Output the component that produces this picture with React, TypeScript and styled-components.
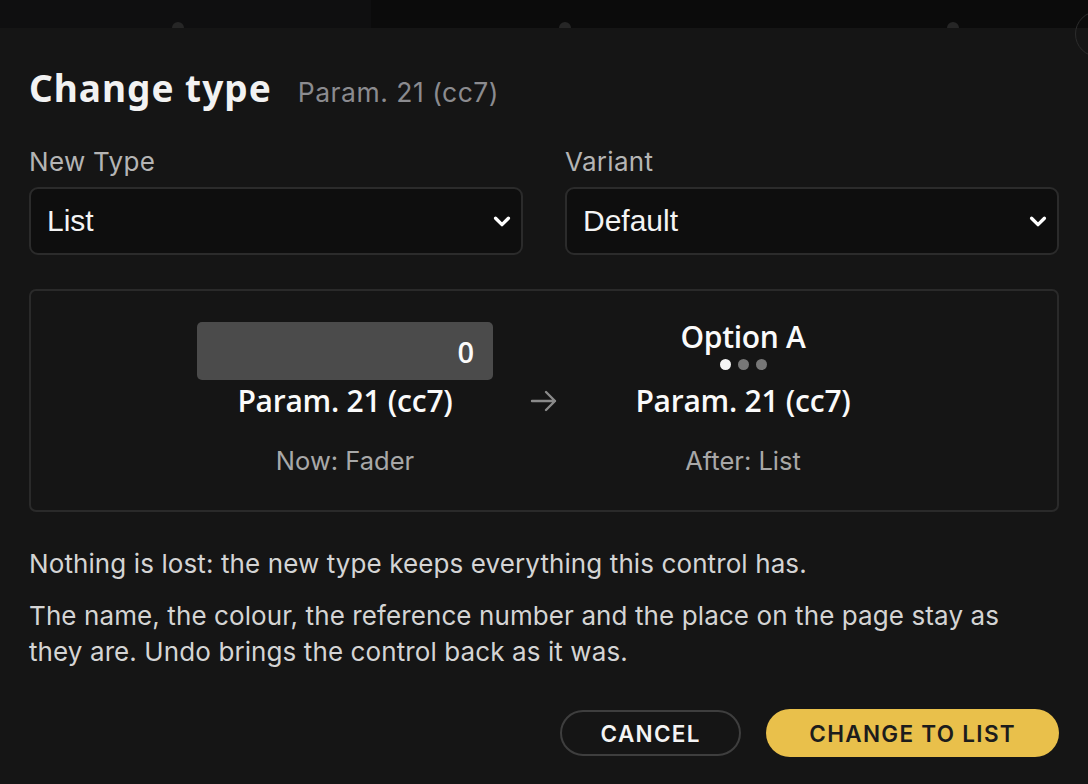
import React from "react";
import styled, { createGlobalStyle } from "styled-components";

const GlobalStyle = createGlobalStyle`
  html, body {
    margin: 0;
    padding: 0;
    background: #0b0b0b;
    width: 1088px;
    height: 784px;
    overflow: hidden;
  }
  * { box-sizing: border-box; }
`;

const Backdrop = styled.div`
  position: relative;
  width: 1088px;
  height: 784px;
  display: flex;
  flex-direction: column;
  background: #0b0b0b;
`;

const BackStrip = styled.div`
  height: 28px;
  display: flex;
  flex-shrink: 0;
`;

const BackPanel = styled.div<{ $w: string; $bg: string }>`
  width: ${(p) => p.$w};
  flex: ${(p) => (p.$w === "auto" ? 1 : "none")};
  background: ${(p) => p.$bg};
  position: relative;
`;

const Knob = styled.div<{ $left: number }>`
  position: absolute;
  left: ${(p) => p.$left}px;
  bottom: -6px;
  width: 12px;
  height: 12px;
  border-radius: 50%;
  background: #262626;
`;

const CornerRing = styled.div`
  position: absolute;
  right: -33px;
  top: 11px;
  width: 46px;
  height: 46px;
  border-radius: 50%;
  border: 1.5px solid #2c2c2c;
  z-index: 2;
`;

const Dialog = styled.div`
  flex: 1;
  background: #151515;
  padding: 36px 29px 0 29px;
  display: flex;
  flex-direction: column;
  font-family: Inter, "Noto Sans", sans-serif;
  color: #e8e8e8;
  position: relative;
  z-index: 1;
`;

const Header = styled.div`
  display: flex;
  align-items: baseline;
  gap: 26px;
  height: 48px;
  line-height: 48px;
`;

const Title = styled.h1`
  margin: 0;
  font-family: "Noto Sans", sans-serif;
  font-weight: 700;
  font-size: 37px;
  color: #f2f2f2;
  letter-spacing: 1px;
`;

const Subtitle = styled.span`
  font-family: Inter, "Noto Sans", sans-serif;
  font-size: 26.5px;
  letter-spacing: 0.5px;
  color: #8b8b8f;
`;

const FieldRow = styled.div`
  display: grid;
  grid-template-columns: 1fr 1fr;
  gap: 42px;
  margin-top: 34px;
`;

const Field = styled.div`
  display: flex;
  flex-direction: column;
  gap: 9px;
`;

const Label = styled.label`
  font-size: 26px;
  color: #b4b4b4;
  line-height: 32px;
  letter-spacing: 0.3px;
`;

const SelectBox = styled.div`
  height: 68px;
  border: 2px solid #2b2b2b;
  border-radius: 9px;
  background: #0e0e0e;
  display: flex;
  align-items: center;
  justify-content: space-between;
  padding: 0 8px 0 16px;
  font-family: "Liberation Sans", Arial, sans-serif;
  font-size: 30px;
  color: #f4f4f4;
`;

const Preview = styled.div`
  margin-top: 34px;
  height: 223px;
  border: 2px solid #2a2a2a;
  border-radius: 7px;
  display: flex;
  justify-content: center;
  align-items: flex-start;
  gap: 36px;
  padding-top: 31px;
`;

const PreviewCol = styled.div`
  width: 296px;
  display: flex;
  flex-direction: column;
  align-items: center;
`;

const Fader = styled.div`
  width: 296px;
  height: 58px;
  border-radius: 5px;
  background: #4b4b4b;
  display: flex;
  align-items: center;
  justify-content: flex-end;
  padding-right: 19px;
  font-family: "Open Sans", sans-serif;
  font-weight: 600;
  font-size: 29px;
  color: #fafafa;
`;

const OptionName = styled.div`
  height: 30px;
  line-height: 30px;
  font-family: "Open Sans", sans-serif;
  font-weight: 600;
  font-size: 30px;
  letter-spacing: -0.3px;
  color: #fafafa;
`;

const Dots = styled.div`
  display: flex;
  gap: 7px;
  height: 28px;
  align-items: center;
  padding-bottom: 4px;
`;

const Dot = styled.span<{ $on?: boolean }>`
  width: 11px;
  height: 11px;
  border-radius: 50%;
  background: ${(p) => (p.$on ? "#f5f5f5" : "#777")};
`;

const ControlName = styled.div`
  font-family: "Open Sans", sans-serif;
  font-weight: 600;
  font-size: 30px;
  letter-spacing: -0.25px;
  color: #fafafa;
  line-height: 42px;
`;

const Caption = styled.div`
  margin-top: 24px;
  font-size: 25.5px;
  line-height: 30px;
  color: #a8a8a8;
`;

const ArrowWrap = styled.div`
  width: 30px;
  margin-top: 64px;
  display: flex;
  align-items: center;
  height: 30px;
`;

const Copy = styled.p<{ $top: number }>`
  margin: ${(p) => p.$top}px 0 0 0;
  font-size: 26px;
  line-height: 36px;
  color: #d4d4d4;
  letter-spacing: 0.1px;
`;

const Actions = styled.div`
  display: flex;
  justify-content: flex-end;
  gap: 25px;
  margin-top: 39px;
  align-items: center;
`;

const Button = styled.button<{ $primary?: boolean }>`
  height: ${(p) => (p.$primary ? 48 : 46)}px;
  padding: 0 ${(p) => (p.$primary ? 43 : 38.5)}px;
  border-radius: 24px;
  border: ${(p) => (p.$primary ? "none" : "2px solid #3e3e3e")};
  background: ${(p) => (p.$primary ? "#e9c04b" : "transparent")};
  color: ${(p) => (p.$primary ? "#1c1c1c" : "#f4f4f4")};
  font-family: Inter, "Noto Sans", sans-serif;
  font-weight: 600;
  font-size: 22.5px;
  letter-spacing: 1.3px;
  cursor: pointer;
`;

const Chevron = () => (
  <svg width="22" height="22" viewBox="0 0 24 24" fill="none">
    <path d="M5 9l7 7 7-7" stroke="#fff" strokeWidth="3.6" strokeLinecap="round" strokeLinejoin="round" />
  </svg>
);

const Arrow = () => (
  <svg width="30" height="30" viewBox="0 0 30 30" fill="none">
    <path d="M3 15h23M17 6l9 9-9 9" stroke="#8a8a8a" strokeWidth="2.4" strokeLinecap="round" strokeLinejoin="round" />
  </svg>
);

export default function App() {
  return (
    <>
      <GlobalStyle />
      <Backdrop>
        <BackStrip>
          <BackPanel $w="371px" $bg="#0f0f10">
            <Knob $left={172} />
          </BackPanel>
          <BackPanel $w="auto" $bg="#0b0b0b">
            <Knob $left={188} />
            <Knob $left={576} />
          </BackPanel>
        </BackStrip>
        <CornerRing />
        <Dialog>
          <Header>
            <Title>Change type</Title>
            <Subtitle>Param. 21 (cc7)</Subtitle>
          </Header>

          <FieldRow>
            <Field>
              <Label>New Type</Label>
              <SelectBox>
                List
                <Chevron />
              </SelectBox>
            </Field>
            <Field>
              <Label>Variant</Label>
              <SelectBox>
                Default
                <Chevron />
              </SelectBox>
            </Field>
          </FieldRow>

          <Preview>
            <PreviewCol>
              <Fader>0</Fader>
              <ControlName>Param. 21 (cc7)</ControlName>
              <Caption>Now: Fader</Caption>
            </PreviewCol>
            <ArrowWrap>
              <Arrow />
            </ArrowWrap>
            <PreviewCol>
              <OptionName>Option A</OptionName>
              <Dots>
                <Dot $on />
                <Dot />
                <Dot />
              </Dots>
              <ControlName>Param. 21 (cc7)</ControlName>
              <Caption>After: List</Caption>
            </PreviewCol>
          </Preview>

          <Copy $top={34}>Nothing is lost: the new type keeps everything this control has.</Copy>
          <Copy $top={16}>
            The name, the colour, the reference number and the place on the page stay as they are. Undo brings the
            control back as it was.
          </Copy>

          <Actions>
            <Button>CANCEL</Button>
            <Button $primary>CHANGE TO LIST</Button>
          </Actions>
        </Dialog>
      </Backdrop>
    </>
  );
}
